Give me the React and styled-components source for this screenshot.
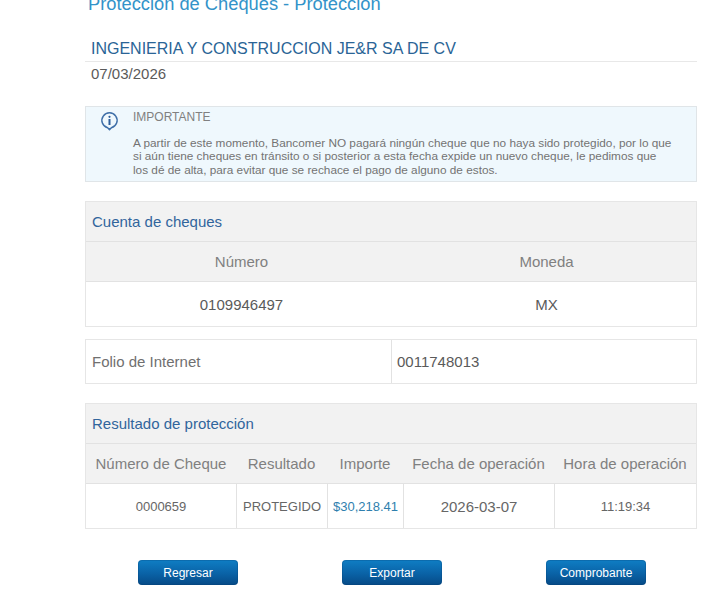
import React from "react";
import styled, { createGlobalStyle } from "styled-components";

const GlobalStyle = createGlobalStyle`
  html, body {
    margin: 0;
    padding: 0;
    background: #fff;
    overflow: hidden;
  }
  body {
    font-family: "Liberation Sans", Arial, sans-serif;
    color: #666;
  }
`;

export default function App() {
  return (
    <>
      <GlobalStyle />
      <Page>
        <Title>Protección de Cheques - Protección</Title>
        <Company>INGENIERIA Y CONSTRUCCION JE&amp;R SA DE CV</Company>
        <DateLine>07/03/2026</DateLine>

        <Notice>
          <NoticeIcon>
            <svg width="19" height="20" viewBox="0 0 19 20" fill="none">
              <path
                d="M9.5 18.6 L7.6 16.8 A7.6 7.6 0 1 1 11.4 16.8 Z"
                stroke="#3f6fa8"
                strokeWidth="1.5"
                strokeLinejoin="round"
              />
              <circle cx="9.5" cy="5.8" r="1.1" fill="#2f5f9c" />
              <rect x="8.5" y="8" width="2" height="6" fill="#2f5f9c" />
            </svg>
          </NoticeIcon>
          <NoticeBody>
            <NoticeHead>IMPORTANTE</NoticeHead>
            <NoticeText>
              A partir de este momento, Bancomer NO pagará ningún cheque que no haya sido protegido, por lo que
              <br />
              si aún tiene cheques en tránsito o si posterior a esta fecha expide un nuevo cheque, le pedimos que
              <br />
              los dé de alta, para evitar que se rechace el pago de alguno de estos.
            </NoticeText>
          </NoticeBody>
        </Notice>

        <Panel $mt={19}>
          <PanelTitle>Cuenta de cheques</PanelTitle>
          <AccountRow $head>
            <HeadCell>Número</HeadCell>
            <HeadCell>Moneda</HeadCell>
          </AccountRow>
          <AccountRow>
            <PlainCell>0109946497</PlainCell>
            <PlainCell>MX</PlainCell>
          </AccountRow>
        </Panel>

        <Folio>
          <FolioLabel>Folio de Internet</FolioLabel>
          <FolioValue>0011748013</FolioValue>
        </Folio>

        <Panel $mt={19}>
          <PanelTitle>Resultado de protección</PanelTitle>
          <ResultRow $head>
            <HeadCell>Número de Cheque</HeadCell>
            <HeadCell>Resultado</HeadCell>
            <HeadCell>Importe</HeadCell>
            <HeadCell>Fecha de operación</HeadCell>
            <HeadCell>Hora de operación</HeadCell>
          </ResultRow>
          <ResultRow>
            <Cell>0000659</Cell>
            <Cell>PROTEGIDO</Cell>
            <Cell $link>$30,218.41</Cell>
            <Cell $size={15}>2026-03-07</Cell>
            <Cell>11:19:34</Cell>
          </ResultRow>
        </Panel>

        <Actions>
          <Button>Regresar</Button>
          <Button>Exportar</Button>
          <Button>Comprobante</Button>
        </Actions>
      </Page>
    </>
  );
}

const Page = styled.div`
  width: 612px;
  margin-left: 85px;
  height: 606px;
  display: flex;
  flex-direction: column;
`;

const Title = styled.h1`
  margin: -7px 0 0 3px;
  font-size: 18.3px;
  line-height: 22px;
  font-weight: 400;
  color: #3393c9;
`;

const Company = styled.h2`
  margin: 24px 0 0;
  padding: 0 0 3px 6px;
  font-size: 16px;
  line-height: 19px;
  font-weight: 400;
  color: #2a6496;
  border-bottom: 1px solid #e8e8e8;
`;

const DateLine = styled.div`
  padding: 3px 0 0 6px;
  font-size: 15px;
  line-height: 18px;
  color: #5a5a5a;
`;

const Notice = styled.section`
  margin-top: 23px;
  height: 76px;
  box-sizing: border-box;
  background: #eff8fd;
  border: 1px solid #e0e5e8;
  display: flex;
`;

const NoticeIcon = styled.div`
  width: 47px;
  padding: 4px 0 0 14px;
  box-sizing: border-box;
`;

const NoticeBody = styled.div`
  padding-top: 3px;
`;

const NoticeHead = styled.div`
  font-size: 12px;
  line-height: 14px;
  color: #808080;
`;

const NoticeText = styled.p`
  margin: 13px 0 0;
  font-size: 11.8px;
  line-height: 13.3px;
  color: #737373;
  white-space: nowrap;
`;

const Panel = styled.section`
  margin-top: ${(p) => p.$mt}px;
  border: 1px solid #e6e6e6;
  box-sizing: border-box;
`;

const PanelTitle = styled.div`
  height: 39px;
  padding-left: 6px;
  display: flex;
  align-items: center;
  background: #f2f2f2;
  border-bottom: 1px solid #e2e2e2;
  font-size: 15px;
  color: #31659c;
`;

const AccountRow = styled.div`
  display: grid;
  grid-template-columns: 311px 1fr;
  height: ${(p) => (p.$head ? "39px" : "44px")};
  background: ${(p) => (p.$head ? "#f2f2f2" : "#fff")};
  border-bottom: ${(p) => (p.$head ? "1px solid #e2e2e2" : "none")};
`;

const ResultRow = styled.div`
  display: grid;
  grid-template-columns: 150px 91px 76px 151px 1fr;
  height: ${(p) => (p.$head ? "39px" : "44px")};
  background: ${(p) => (p.$head ? "#f2f2f2" : "#fff")};
  border-bottom: ${(p) => (p.$head ? "1px solid #e2e2e2" : "none")};
`;

const HeadCell = styled.div`
  display: flex;
  align-items: center;
  justify-content: center;
  font-size: 15px;
  color: #808080;
  white-space: nowrap;
`;

const PlainCell = styled.div`
  display: flex;
  align-items: center;
  justify-content: center;
  font-size: 15px;
  color: #5a5a5a;
`;

const Cell = styled.div`
  display: flex;
  align-items: center;
  justify-content: center;
  font-size: ${(p) => p.$size || 13}px;
  color: ${(p) => (p.$link ? "#2f7fae" : "#666")};
  white-space: nowrap;
  & + & {
    border-left: 1px solid #e2e2e2;
  }
`;

const Folio = styled.div`
  margin-top: 12px;
  height: 45px;
  box-sizing: border-box;
  border: 1px solid #e6e6e6;
  display: grid;
  grid-template-columns: 305px 1fr;
  font-size: 15px;
  color: #707070;
`;

const FolioLabel = styled.div`
  display: flex;
  align-items: center;
  padding-left: 6px;
`;

const FolioValue = styled.div`
  display: flex;
  align-items: center;
  padding-left: 5px;
  border-left: 1px solid #e2e2e2;
  color: #5a5a5a;
`;

const Actions = styled.div`
  margin-top: 31px;
  padding-left: 53px;
  display: flex;
  gap: 104px;
`;

const Button = styled.button`
  width: 100px;
  height: 25px;
  padding: 0;
  border: none;
  border-radius: 4px;
  background: linear-gradient(to bottom, #0f7ec4 0%, #0a62a6 55%, #064a86 100%);
  box-shadow: 0 0 0 1px rgba(5, 60, 110, 0.25) inset;
  color: #fff;
  font-family: "Liberation Sans", Arial, sans-serif;
  font-size: 12px;
`;
